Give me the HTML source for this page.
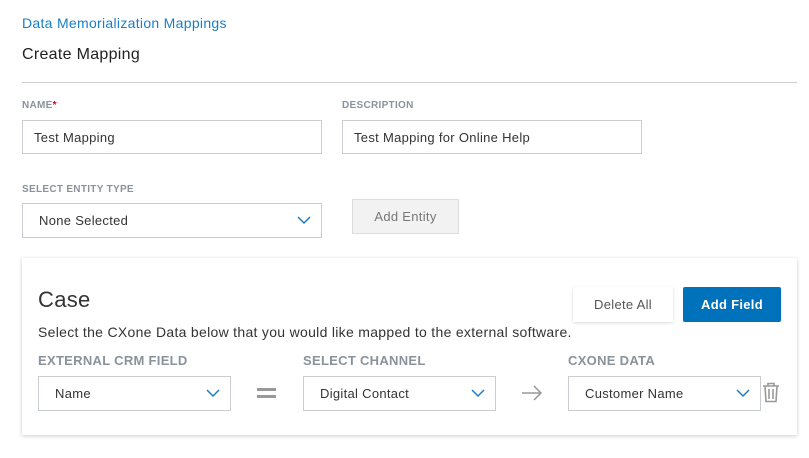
<!DOCTYPE html>
<html><head><style>
body{margin:0;width:809px;height:458px;background:#fff;font-family:"Liberation Sans",sans-serif;position:relative;overflow:hidden;color:#333;letter-spacing:0.3px}
.a{position:absolute;white-space:nowrap}
.lbl{font-size:10px;font-weight:bold;color:#8a929b}
.inp{position:absolute;border:1px solid #c9cdd1;box-sizing:border-box;background:#fff;font-size:13px;color:#333;padding-left:11px;display:flex;align-items:center}
.chev{position:absolute;right:10px;top:50%;margin-top:-5px}
.big{font-size:13px;font-weight:bold;color:#8a929b}
</style></head><body>
<div class="a" style="left:22px;top:15px;font-size:14px;color:#1a7ec4">Data Memorialization Mappings</div>
<div class="a" style="left:22px;top:46px;font-size:16px;color:#222">Create Mapping</div>
<div class="a" style="left:22px;top:82px;width:775px;height:1px;background:#cdd1d4"></div>
<div class="a lbl" style="left:22px;top:100px">NAME<span style="color:#d0021b">*</span></div>
<div class="a lbl" style="left:342px;top:100px">DESCRIPTION</div>
<div class="inp" style="left:22px;top:120px;width:300px;height:34px">Test Mapping</div>
<div class="inp" style="left:342px;top:120px;width:300px;height:34px">Test Mapping for Online Help</div>
<div class="a lbl" style="left:22px;top:184px">SELECT ENTITY TYPE</div>
<div class="inp" style="left:22px;top:203px;width:300px;height:35px;padding-left:16px">None Selected<svg class="chev" width="14" height="9" viewBox="0 0 14 9"><path d="M1 1l6 6 6-6" fill="none" stroke="#1a7ec4" stroke-width="1.5"/></svg></div>
<div class="a" style="left:352px;top:199px;width:107px;height:35px;background:#f2f2f2;border:1px solid #dcdcdc;box-sizing:border-box;font-size:13px;color:#777;display:flex;align-items:center;justify-content:center">Add Entity</div>

<div class="a" style="left:22px;top:258px;width:775px;height:177px;background:#fff;box-shadow:0 1px 4px rgba(0,0,0,.2)"></div>
<div class="a" style="left:38px;top:287px;font-size:22px;color:#333">Case</div>
<div class="a" style="left:573px;top:287px;width:100px;height:35px;background:#fff;box-shadow:0 1px 3px rgba(0,0,0,.15);font-size:13px;color:#555;display:flex;align-items:center;justify-content:center">Delete All</div>
<div class="a" style="left:683px;top:287px;width:98px;height:35px;background:#0072bb;border-radius:2px;font-size:13px;font-weight:bold;color:#fff;display:flex;align-items:center;justify-content:center">Add Field</div>
<div class="a" style="left:38px;top:324px;font-size:14px;color:#333">Select the CXone Data below that you would like mapped to the external software.</div>
<div class="a big" style="left:38px;top:353px">EXTERNAL CRM FIELD</div>
<div class="a big" style="left:303px;top:353px">SELECT CHANNEL</div>
<div class="a big" style="left:568px;top:353px">CXONE DATA</div>
<div class="inp" style="left:38px;top:376px;width:193px;height:35px;padding-left:16px">Name<svg class="chev" width="14" height="9" viewBox="0 0 14 9"><path d="M1 1l6 6 6-6" fill="none" stroke="#1a7ec4" stroke-width="1.5"/></svg></div>
<div class="a" style="left:257px;top:388px;width:19px;height:3px;background:#999"></div>
<div class="a" style="left:257px;top:395px;width:19px;height:3px;background:#999"></div>
<div class="inp" style="left:303px;top:376px;width:193px;height:35px;padding-left:16px">Digital Contact<svg class="chev" width="14" height="9" viewBox="0 0 14 9"><path d="M1 1l6 6 6-6" fill="none" stroke="#1a7ec4" stroke-width="1.5"/></svg></div>
<svg class="a" style="left:521px;top:385px" width="22" height="16" viewBox="0 0 22 16"><path d="M1 8h19M13 1l7 7-7 7" fill="none" stroke="#999" stroke-width="1.5"/></svg>
<div class="inp" style="left:568px;top:376px;width:193px;height:35px;padding-left:16px">Customer Name<svg class="chev" width="14" height="9" viewBox="0 0 14 9"><path d="M1 1l6 6 6-6" fill="none" stroke="#1a7ec4" stroke-width="1.5"/></svg></div>
<svg class="a" style="left:762px;top:382px" width="18" height="21" viewBox="0 0 18 21"><path d="M1 4h16M6 4V1.5h6V4M3 4l1 15.5h10L15 4M7 7v10M11 7v10" fill="none" stroke="#999" stroke-width="1.6"/></svg>
</body></html>
